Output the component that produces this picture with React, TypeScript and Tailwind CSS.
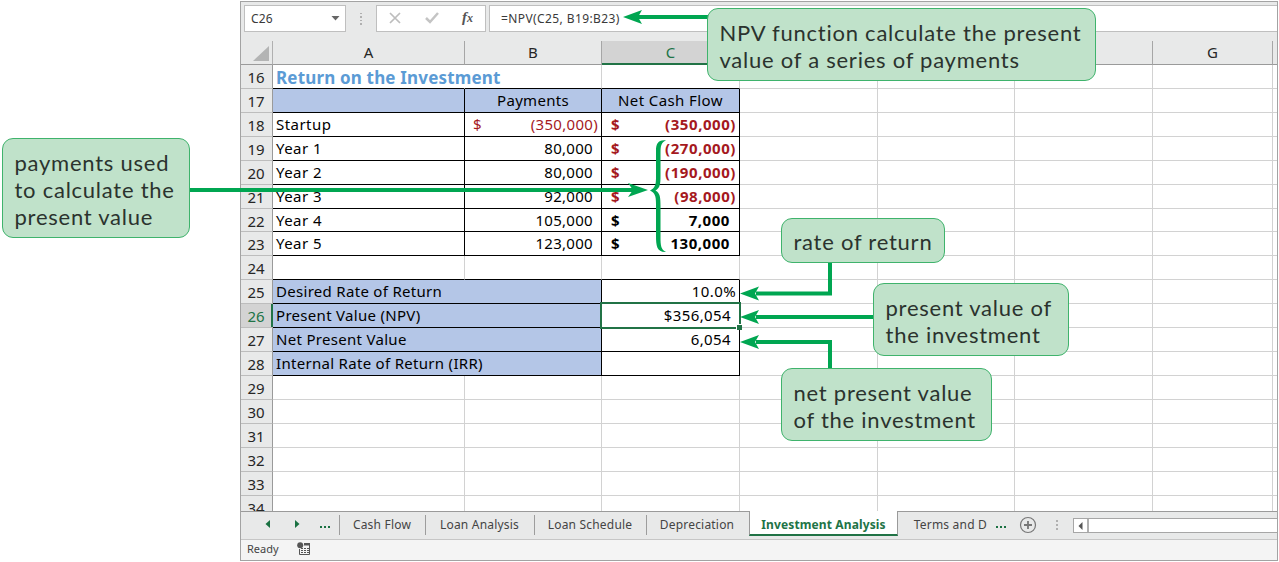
import React from "react";

type Row = {
  n: number;
  a?: string;
  b?: string;
  c?: string;
  bDollar?: boolean;
  kind?: "title" | "head" | "pay" | "gap" | "result";
  neg?: boolean;
};

const rows: Row[] = [
  { n: 16, a: "Return on the Investment", kind: "title" },
  { n: 17, b: "Payments", c: "Net Cash Flow", kind: "head" },
  { n: 18, a: "Startup", b: "(350,000)", c: "(350,000)", bDollar: true, kind: "pay", neg: true },
  { n: 19, a: "Year 1", b: "80,000", c: "(270,000)", kind: "pay", neg: true },
  { n: 20, a: "Year 2", b: "80,000", c: "(190,000)", kind: "pay", neg: true },
  { n: 21, a: "Year 3", b: "92,000", c: "(98,000)", kind: "pay", neg: true },
  { n: 22, a: "Year 4", b: "105,000", c: "7,000", kind: "pay" },
  { n: 23, a: "Year 5", b: "123,000", c: "130,000", kind: "pay" },
  { n: 24, kind: "gap" },
  { n: 25, a: "Desired Rate of Return", c: "10.0%", kind: "result" },
  { n: 26, a: "Present Value (NPV)", c: "$356,054", kind: "result" },
  { n: 27, a: "Net Present Value", c: "6,054", kind: "result" },
  { n: 28, a: "Internal Rate of Return (IRR)", c: "", kind: "result" },
  { n: 29 },
  { n: 30 },
  { n: 31 },
  { n: 32 },
  { n: 33 },
  { n: 34 },
];

const COLS = "grid grid-cols-[32px_192px_137px_138px_138px_137px_138px_120px_4px]";

function SheetRow({ row }: { row: Row }) {
  const { kind, n } = row;
  const black = "border-b-black";
  const gray = "border-[#d2d2d2]";
  const boxed = kind === "head" || kind === "pay";
  const bottom = kind ? black : "border-b-[#d2d2d2]";
  const blue = "bg-[#b4c6e7]";
  const cell = "flex items-center border-b border-r whitespace-nowrap";
  const selected = n === 26;
  return (
    <div className={`${COLS} shrink-0 ${n === 22 ? "h-[23px]" : "h-6"}`}>
      <div
        className={`relative flex items-center justify-center border-b border-r border-b-[#bdbdbd] border-r-[#9a9a9a] pr-px pt-0.5 text-[15px] ${
          selected ? "bg-[#d3d3d3] text-[#217346]" : "bg-[#e8e9e9] text-[#262626]"
        }`}
      >
        {n}
        {selected && <span className="absolute -right-px top-0 h-[23px] w-0.5 bg-[#217346]" />}
      </div>
      {kind === "result" ? (
        <div className={`${cell} col-span-2 border-r-black ${black} ${blue} pl-[3px]`}>
          <span className="tracking-[0.3px]">{row.a}</span>
        </div>
      ) : (
        <>
          <div
            className={`${cell} ${bottom} ${boxed ? "border-r-black" : kind === "title" ? "border-r-transparent" : "border-r-[#d2d2d2]"} ${
              kind === "head" ? blue : ""
            } pl-[3px]`}
          >
            {kind === "title" ? (
              <span className="pt-px text-[17px] font-bold tracking-[0.17px] text-[#5b9bd5]">{row.a}</span>
            ) : (
              <span className="tracking-[0.45px]">{row.a}</span>
            )}
          </div>
          <div
            className={`${cell} ${bottom} ${boxed ? "border-r-black" : "border-r-[#d2d2d2]"} ${
              kind === "head"
                ? `${blue} justify-center`
                : row.bDollar
                  ? "justify-between pl-2 pr-[3px] text-[#a5191e]"
                  : "justify-end pr-2"
            }`}
          >
            {row.bDollar && <span>$</span>}
            <span className="tracking-[0.3px]">{row.b}</span>
          </div>
        </>
      )}
      <div
        className={`${cell} relative ${bottom} ${boxed || kind === "result" ? "border-r-black" : "border-r-[#d2d2d2]"} ${
          kind === "head"
            ? `${blue} justify-center`
            : kind === "pay"
              ? `justify-between pl-[9px] font-bold ${row.neg ? "pr-[3px] text-[#a5191e]" : "pr-[9px]"}`
              : `justify-end ${n === 25 ? "pr-[3px]" : "pr-2"}`
        }`}
      >
        {kind === "pay" && <span>$</span>}
        <span className={kind === "pay" ? "tracking-[0.55px]" : "tracking-[0.4px]"}>{row.c}</span>
        {selected && (
          <span className="absolute -left-0.5 -top-0.5 z-10 h-[27px] w-[141px] border-2 border-[#217346]">
            <span className="absolute -bottom-[3px] -right-[3px] h-1.5 w-1.5 border-l border-t border-white bg-[#217346]" />
          </span>
        )}
      </div>
      {[0, 1, 2, 3, 4].map((i) => (
        <div key={i} className={`border-b ${i < 4 ? "border-r" : ""} ${gray}`} />
      ))}
    </div>
  );
}

function ColumnHeads() {
  return (
    <div className={`${COLS} h-6 shrink-0 text-[15px] text-[#262626]`}>
      <div className="flex items-end justify-end border-b border-r border-b-[#9a9a9a] border-r-[#b0b0b0] pb-[3px] pr-[3px]">
        <svg width="16" height="15" viewBox="0 0 16 15">
          <path d="M16 0V15H0Z" fill="#b3b4b4" />
        </svg>
      </div>
      {["A", "B", "C", "", "", "", "G", ""].map((l, i) => (
        <div
          key={i}
          className={`flex items-center justify-center ${i < 7 ? "border-r border-r-[#a6a6a6]" : ""} ${
            l === "C" ? "border-b-2 border-b-[#217346] bg-[#d3d3d3] pt-px text-[#217346]" : "border-b border-b-[#9a9a9a]"
          }`}
        >
          {l}
        </div>
      ))}
    </div>
  );
}

function FormulaBar() {
  return (
    <div className="flex h-[27px] shrink-0 text-[12px] text-[#3a3a3a]">
      <div className="ml-[3px] flex w-[102px] items-center justify-between border border-[#bfbfbf] bg-white pl-1.5 pr-[5px]">
        <span className="tracking-[0.1px]">C26</span>
        <svg width="9" height="5" viewBox="0 0 9 5">
          <path d="M0.5 0h8l-4 4.5z" fill="#666" />
        </svg>
      </div>
      <div className="flex w-[30px] flex-col items-center justify-center gap-0.5">
        {[0, 1, 2, 3].map((i) => (
          <span key={i} className="h-[1.5px] w-0.5 bg-[#b0b0b0]" />
        ))}
      </div>
      <div className="flex w-[110px] items-center border border-[#bfbfbf] bg-white">
        <svg width="108" height="25" viewBox="0 0 108 25" fill="none">
          <path d="M13 7l10 10M23 7l-10 10" stroke="#bdbdbd" strokeWidth="1.7" />
          <path d="M49 12l4 4 8-9" stroke="#c4c4c4" strokeWidth="2.5" />
          <text x="85" y="16" fontFamily="Liberation Serif, serif" fontStyle="italic" fontWeight="bold" fontSize="15" fill="#555">
            f
          </text>
          <text x="90" y="16" fontFamily="Liberation Serif, serif" fontStyle="italic" fontWeight="bold" fontSize="12" fill="#555">
            x
          </text>
        </svg>
      </div>
      <div className="ml-[3px] flex flex-1 items-center border-y border-l border-[#bfbfbf] bg-white pl-[11px]">
        <span className="tracking-[0.4px]">=NPV(C25, B19:B23)</span>
      </div>
    </div>
  );
}

function Tab({ label, width, last }: { label: string; width: string; last?: boolean }) {
  return (
    <div className={`relative flex h-6 items-center justify-center pr-0.5 pt-px tracking-[0.2px] ${width}`}>
      {label}
      {!last && <span className="absolute right-0 top-[3px] h-5 w-px bg-[#9d9d9d]" />}
    </div>
  );
}

function SheetTabs() {
  return (
    <div className="flex h-[28px] shrink-0 border-t border-[#9a9a9a] bg-[#e8e9e9] text-[12px] text-[#444]">
      <div className="relative flex h-6 w-[99px] items-center">
        <svg width="98" height="24" viewBox="0 0 98 24">
          <path d="M29 8v8l-4.500-4z M54 8v8l4.500-4z" fill="#1a7142" />
          <path d="M79 14h2v2h-2zM83 14h2v2h-2zM87 14h2v2h-2z" fill="#1a7142" />
        </svg>
        <span className="absolute right-0 top-[3px] h-5 w-px bg-[#9d9d9d]" />
      </div>
      <Tab label="Cash Flow" width="w-[86px]" />
      <Tab label="Loan Analysis" width="w-[109px]" />
      <Tab label="Loan Schedule" width="w-[112px]" />
      <Tab label="Depreciation" width="w-[102px]" last />
      <div className="-mt-px flex h-[25px] w-[149px] items-center justify-center border-x border-b-2 border-x-[#9a9a9a] border-b-[#217346] bg-white pt-[5px] font-bold tracking-[0.12px] text-[#217346]">
        Investment Analysis
      </div>
      <div className="flex h-6 w-[89px] items-center justify-end pt-px tracking-[0.2px]">Terms and D</div>
      <svg width="86" height="27" viewBox="0 0 86 27" fill="none">
        <path d="M9 14h2v2H9zM13 14h2v2h-2zM17 14h2v2h-2z" fill="#1a7142" />
        <circle cx="41" cy="13" r="7.500" stroke="#777" strokeWidth="1.200" />
        <path d="M41 9v8M37 13h8" stroke="#777" strokeWidth="1.800" />
        <path d="M69 8h2v2h-2zM69 12h2v2h-2zM69 16h2v2h-2z" fill="#b0b0b0" />
      </svg>
      <div className="mt-1.5 flex h-[15px] flex-1 border-y border-l border-[#a6a6a6] bg-white">
        <div className="flex w-[15px] items-center justify-center border-r-2 border-[#b0b0b0]">
          <svg width="5" height="8" viewBox="0 0 5 8">
            <path d="M4.500 0v8L0.500 4z" fill="#555" />
          </svg>
        </div>
      </div>
    </div>
  );
}

function StatusBar() {
  return (
    <div className="flex flex-1 items-center gap-[18px] border-t border-[#c6c6c6] bg-[#f4f4f4] pb-[3px] pl-1.5 text-[11px] text-[#444]">
      <span>Ready</span>
      <svg width="14" height="14" viewBox="0 0 14 14" fill="none">
        <path d="M7 1.500h5.500v11H2.500V7" stroke="#555" strokeWidth="1" />
        <path d="M7 1h6v2.500H7z" fill="#555" />
        <circle cx="3.200" cy="3.200" r="3" fill="#555" />
        <path d="M4 6.500h8M4 8.500h8M4 10.500h8" stroke="#555" strokeDasharray="2 1" />
      </svg>
    </div>
  );
}

function Callout({ place, lines }: { place: string; lines: string[] }) {
  return (
    <div
      className={`absolute flex flex-col justify-center rounded-[11px] border-[1.5px] border-[#3fb36c] bg-[#c0e2ca] pl-[11.500px] pt-0.5 font-['Lato',sans-serif] text-[22px] leading-[27px] tracking-[0.75px] text-[#2b332e] whitespace-nowrap ${place}`}
    >
      {lines.map((l) => (
        <span key={l}>{l}</span>
      ))}
    </div>
  );
}

function Arrows() {
  return (
    <svg className="absolute inset-0" width="1279" height="562" viewBox="0 0 1279 562" fill="none">
      <g stroke="#00a651" strokeWidth="4">
        <path d="M637 17H710" />
        <path d="M188 190H634" />
        <path d="M756 293.500H830V260" />
        <path d="M756 317H876" />
        <path d="M756 342H830V370" />
      </g>
      <g fill="#00a651">
        <path d="M623 17l19-7-4 7 4 7z" />
        <path d="M648 190l-20-7 5 7-5 7z" />
        <path d="M740 293.500l19-7-4 7 4 7z" />
        <path d="M740 317l19-7-4 7 4 7z" />
        <path d="M740 342l19-7-4 7 4 7z" />
        <path d="M666 140.500C658 139.500 656 144 656 151V177C656 185 655 188 650 190.500C655 193 656 196 656 204V236C656 246 657 252.500 666 252C661 250 660.500 245 660.500 238V206C660.500 197 660 193 655.500 190.500C660 188 660.500 184 660.500 176V153C660.500 146 661 142.500 666 140.500Z" />
      </g>
    </svg>
  );
}

export default function App() {
  return (
    <div className="relative h-[562px] w-[1279px] overflow-hidden bg-white pl-60 pt-px font-['Noto_Sans',sans-serif] text-[15px] leading-none text-black">
      <div className="flex h-[560px] w-[1038px] flex-col overflow-hidden border border-[#a3a3a3] bg-[#e8e9e9] pt-[3px]">
        <FormulaBar />
        <div className="h-[9px] shrink-0" />
        <ColumnHeads />
        <div className="flex h-[446px] shrink-0 flex-col overflow-hidden bg-white">
          {rows.map((r) => (
            <SheetRow key={r.n} row={r} />
          ))}
        </div>
        <SheetTabs />
        <StatusBar />
      </div>
      <Arrows />
      <Callout place="left-[2px] top-[138px] h-[100px] w-[188px]" lines={["payments used", "to calculate the", "present value"]} />
      <Callout place="left-[707px] top-[8px] h-[73px] w-[389px]" lines={["NPV function calculate the present", "value of a series of payments"]} />
      <Callout place="left-[781px] top-[218px] h-[45px] w-[164px]" lines={["rate of return"]} />
      <Callout place="left-[873px] top-[283px] h-[73px] w-[196px]" lines={["present value of", "the investment"]} />
      <Callout place="left-[781px] top-[368px] h-[73px] w-[211px]" lines={["net present value", "of the investment"]} />
    </div>
  );
}
